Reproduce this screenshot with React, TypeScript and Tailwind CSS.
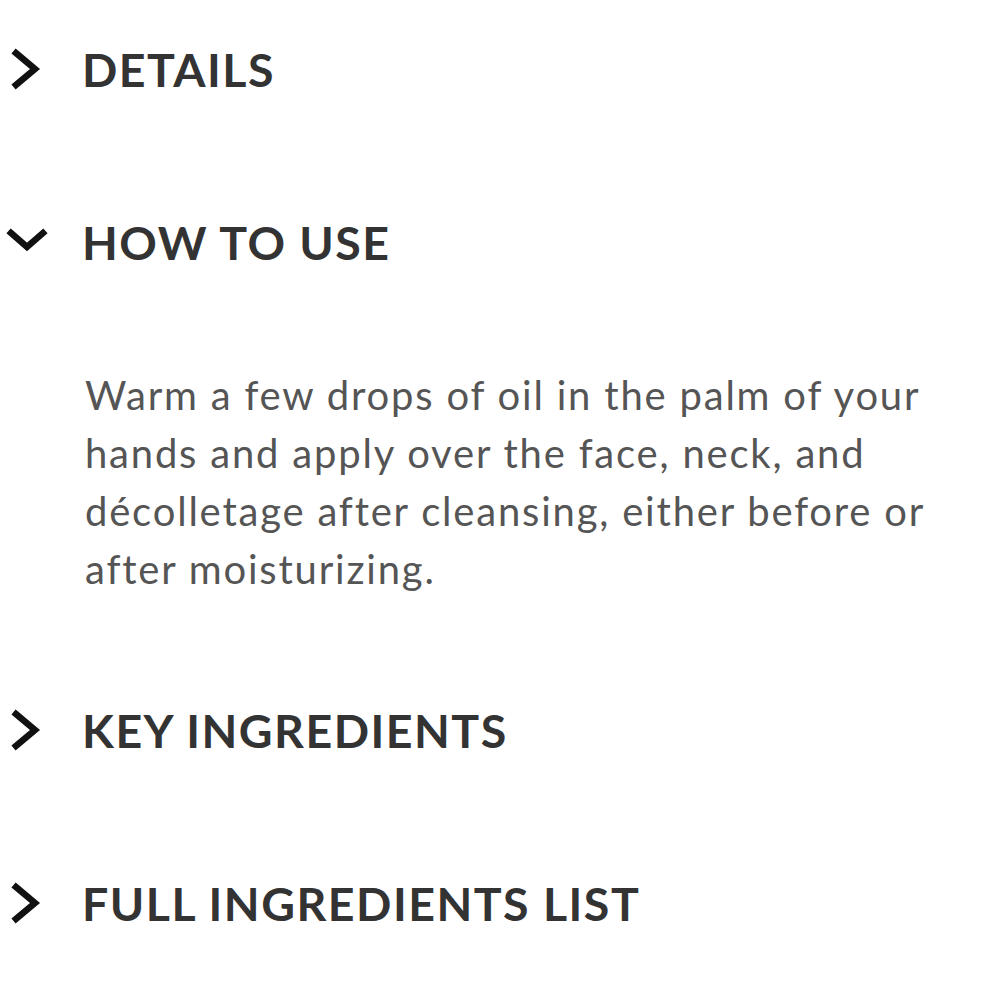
import React from "react";

const Right = () => (
  <svg width="50" height="44" viewBox="0 0 50 44" className="shrink-0 blur-[0.6px]">
    <polyline points="16,6 35,22 16,38" fill="none" stroke="#111" strokeWidth="6.5" strokeLinecap="square" strokeLinejoin="miter" />
  </svg>
);
const Down = () => (
  <svg width="50" height="44" viewBox="0 0 50 44" className="shrink-0 blur-[0.6px]">
    <polyline points="11,13 27,27 43,13" fill="none" stroke="#111" strokeWidth="6.5" strokeLinecap="square" strokeLinejoin="miter" />
  </svg>
);

function Heading({ open, children }: { open?: boolean; children: React.ReactNode }) {
  return (
    <div className="flex items-center h-[58px]">
      <div className="w-[82px] flex items-center">{open ? <Down /> : <Right />}</div>
      <h2 className="text-[46.5px] leading-[58px] font-bold tracking-[1.5px] text-[#333]">{children}</h2>
    </div>
  );
}

export default function App() {
  return (
    <div className="bg-white w-[1000px] h-[1000px] pt-[40px]" style={{ fontFamily: "Lato, 'Noto Sans', sans-serif" }}>
      <div className="flex flex-col">
        <Heading>DETAILS</Heading>
        <div className="h-[115px]" />
        <Heading open>HOW TO USE</Heading>
        <p className="mt-[95px] ml-[85px] w-[865px] text-[40px] leading-[58px] tracking-[1.8px] text-[#555]">
          Warm a few drops of oil in the palm of your hands and apply over the face, neck, and décolletage after cleansing, either before or after moisturizing.
        </p>
        <div className="h-[103px]" />
        <Heading>KEY INGREDIENTS</Heading>
        <div className="h-[115px]" />
        <Heading>FULL INGREDIENTS LIST</Heading>
      </div>
    </div>
  );
}
